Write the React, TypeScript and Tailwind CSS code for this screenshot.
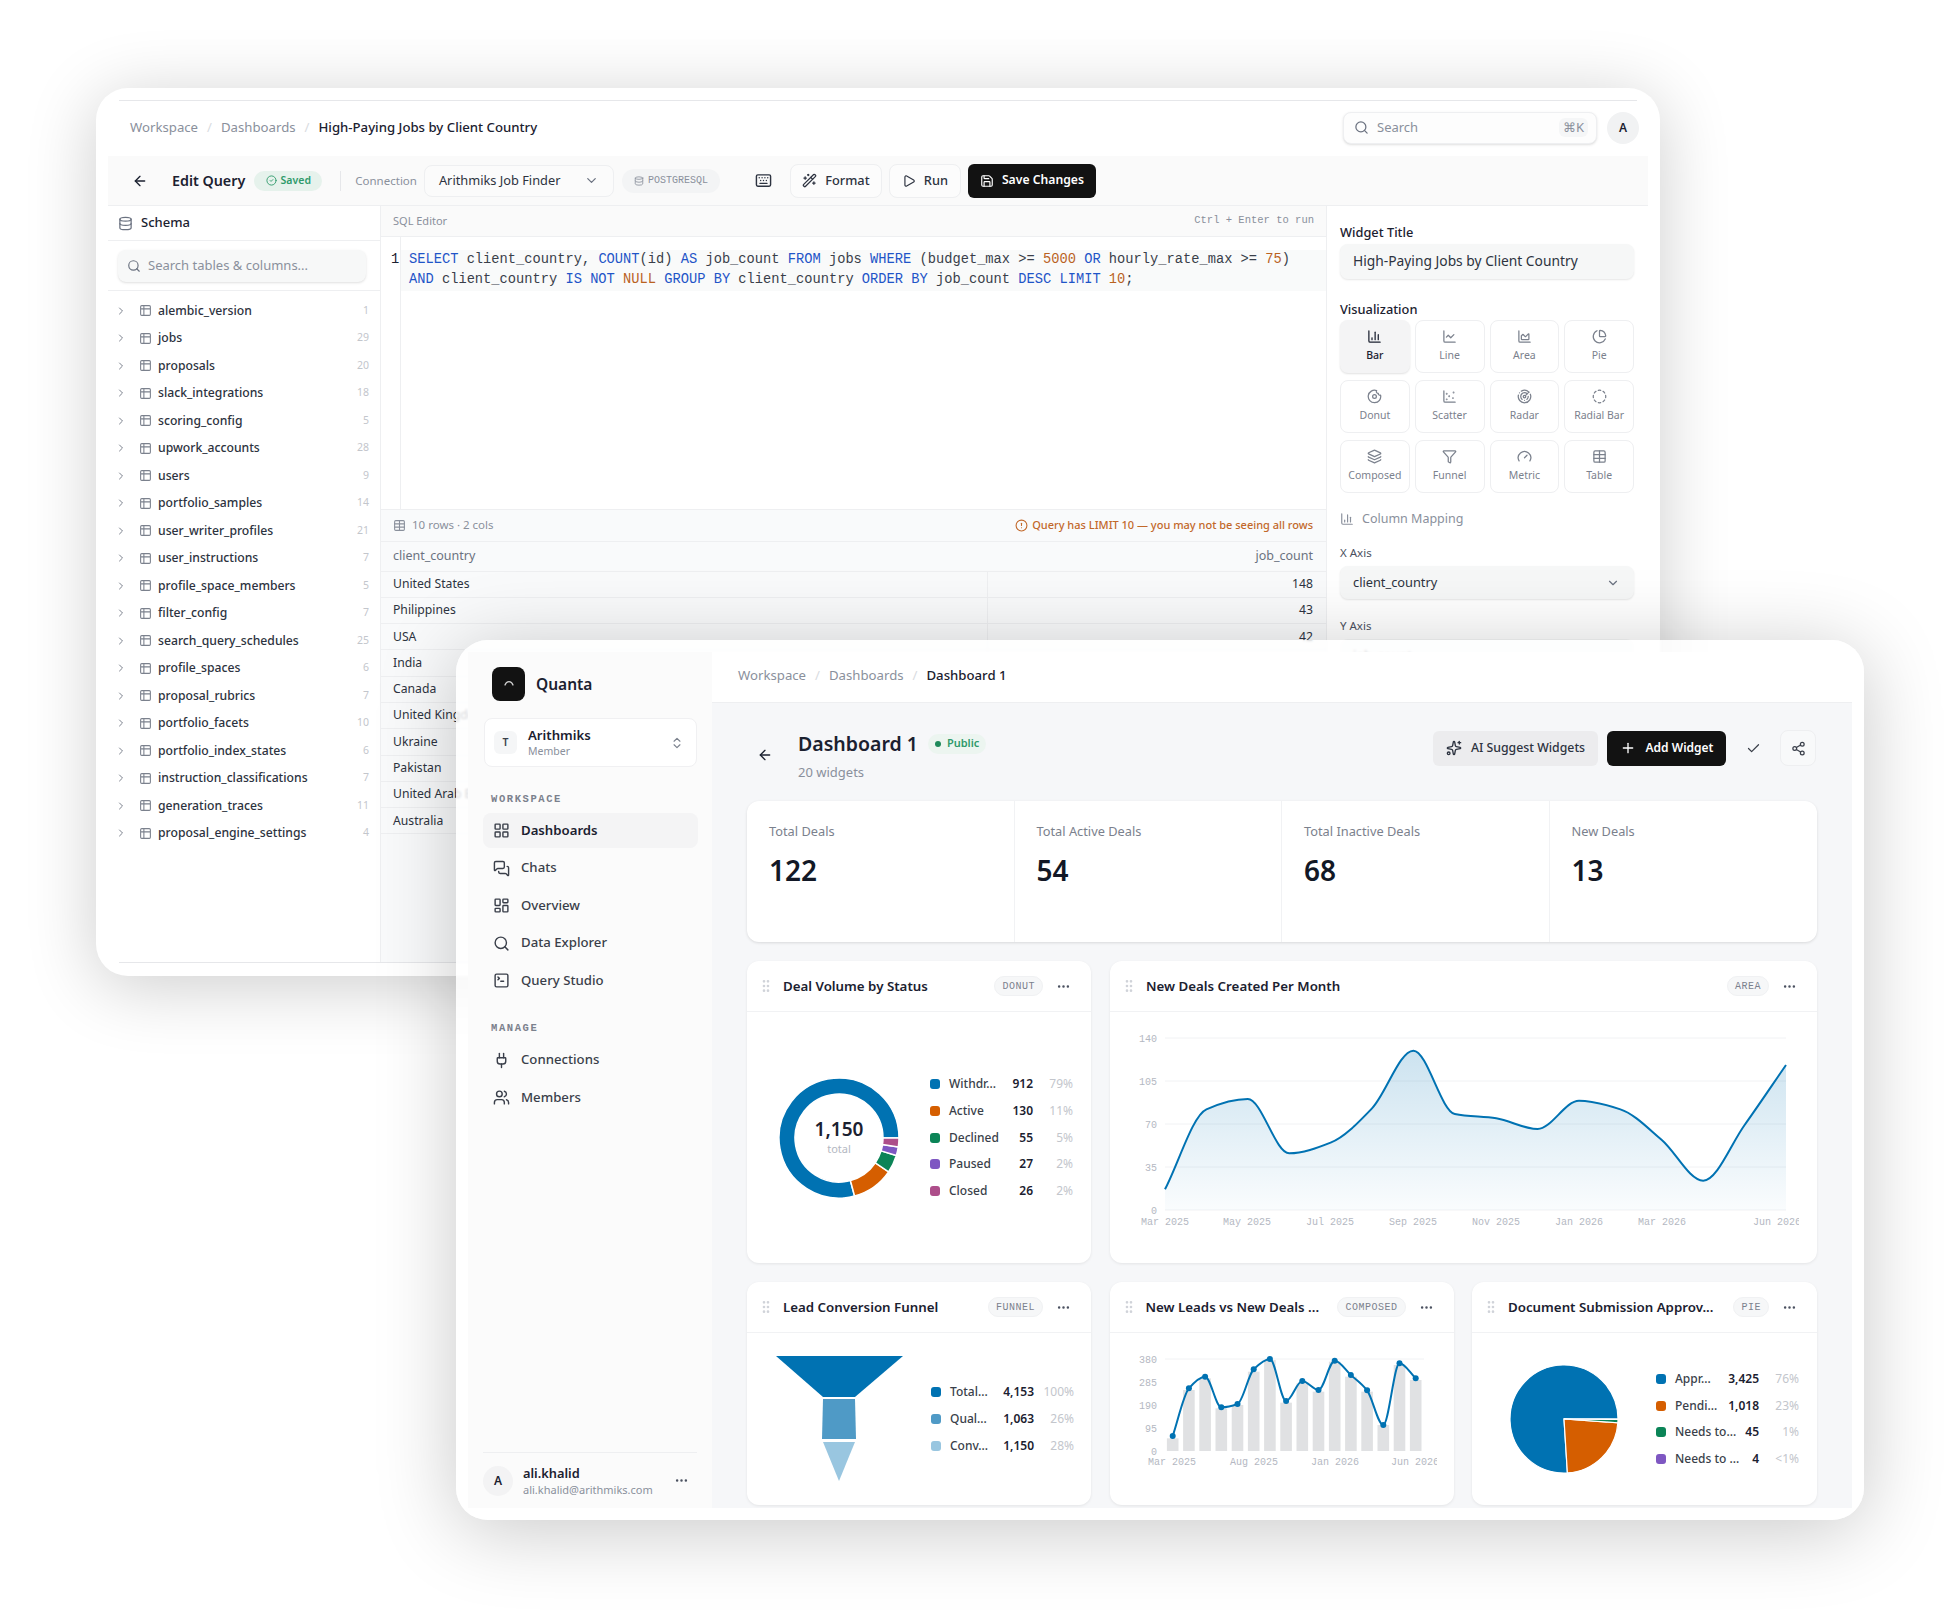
import {
  ArrowLeft, ChartArea, ChartColumn, ChartLine, ChartPie, ChartScatter, Check, ChevronDown, ChevronRight,
  ChevronsUpDown, CircleAlert, CircleCheck, CircleDashed, Database, Donut, Ellipsis, Funnel, Gauge, GripVertical,
  Keyboard, Layers, LayoutDashboard, LayoutGrid, MessagesSquare, Play, Plug, Plus, Radar, Save, Search, Share2,
  Sparkles, SquareTerminal, Table, Table2, Users, WandSparkles,
} from "lucide-react";

const tables: [string, number][] = [
  ["alembic_version", 1], ["jobs", 29], ["proposals", 20], ["slack_integrations", 18], ["scoring_config", 5],
  ["upwork_accounts", 28], ["users", 9], ["portfolio_samples", 14], ["user_writer_profiles", 21],
  ["user_instructions", 7], ["profile_space_members", 5], ["filter_config", 7], ["search_query_schedules", 25],
  ["profile_spaces", 6], ["proposal_rubrics", 7], ["portfolio_facets", 10], ["portfolio_index_states", 6],
  ["instruction_classifications", 7], ["generation_traces", 11], ["proposal_engine_settings", 4],
];

const results: [string, string][] = [
  ["United States", "148"], ["Philippines", "43"], ["USA", "42"], ["India", ""], ["Canada", ""],
  ["United Kingdom", ""], ["Ukraine", ""], ["Pakistan", ""], ["United Arab Emirates", ""], ["Australia", ""],
];

const vizTypes = [
  { name: "Bar", Icon: ChartColumn }, { name: "Line", Icon: ChartLine }, { name: "Area", Icon: ChartArea },
  { name: "Pie", Icon: ChartPie }, { name: "Donut", Icon: Donut }, { name: "Scatter", Icon: ChartScatter },
  { name: "Radar", Icon: Radar }, { name: "Radial Bar", Icon: CircleDashed }, { name: "Composed", Icon: Layers },
  { name: "Funnel", Icon: Funnel }, { name: "Metric", Icon: Gauge }, { name: "Table", Icon: Table },
];

const kpis = [["Total Deals", "122"], ["Total Active Deals", "54"], ["Total Inactive Deals", "68"], ["New Deals", "13"]];

const BLUE = "#0072b2";
const ORANGE = "#d55e00";
const GREEN = "#0b8457";
const PURPLE = "#7e57c2";
const PINK = "#ad4e8a";

// monotone cubic, same shape recharts draws
function monotone(pts: [number, number][]) {
  const n = pts.length;
  const d: number[] = [];
  for (let i = 0; i < n - 1; i++) d.push((pts[i + 1][1] - pts[i][1]) / (pts[i + 1][0] - pts[i][0]));
  const m = pts.map((_, i) => {
    if (i === 0) return d[0];
    if (i === n - 1) return d[n - 2];
    if (d[i - 1] * d[i] <= 0) return 0;
    return (2 * d[i - 1] * d[i]) / (d[i - 1] + d[i]);
  });
  let out = `M${pts[0][0]} ${pts[0][1]}`;
  for (let i = 0; i < n - 1; i++) {
    const h = (pts[i + 1][0] - pts[i][0]) / 3;
    out += `C${pts[i][0] + h} ${pts[i][1] + m[i] * h} ${pts[i + 1][0] - h} ${pts[i + 1][1] - m[i + 1] * h} ${pts[i + 1][0]} ${pts[i + 1][1]}`;
  }
  return out;
}

function polar(cx: number, cy: number, r: number, deg: number) {
  const a = (deg * Math.PI) / 180;
  return [cx + r * Math.cos(a), cy - r * Math.sin(a)];
}

// slices run counter clockwise from 3 o'clock
function slice(cx: number, cy: number, ro: number, ri: number, from: number, to: number) {
  const large = to - from > 180 ? 1 : 0;
  const [x1, y1] = polar(cx, cy, ro, from);
  const [x2, y2] = polar(cx, cy, ro, to);
  if (ri === 0) return `M${cx} ${cy}L${x1} ${y1}A${ro} ${ro} 0 ${large} 0 ${x2} ${y2}Z`;
  const [x3, y3] = polar(cx, cy, ri, to);
  const [x4, y4] = polar(cx, cy, ri, from);
  return `M${x1} ${y1}A${ro} ${ro} 0 ${large} 0 ${x2} ${y2}L${x3} ${y3}A${ri} ${ri} 0 ${large} 1 ${x4} ${y4}Z`;
}

const areaY = [718, 478, 447, 610, 578, 475, 302, 492, 505, 537, 452, 478, 570, 692, 525, 345];
const areaPts: [number, number][] = areaY.map((y, i) => [1165 + i * 41.4, 950 + y / 3]);
const comboLine = [498, 355, 320, 412, 402, 298, 267, 393, 333, 360, 272, 315, 361, 465, 280, 325];
const comboBars = [505, 360, 325, 415, 405, 305, 270, 398, 340, 365, 275, 320, 365, 465, 285, 330];
const comboPts: [number, number][] = comboLine.map((y, i) => [1172.7 + i * 16.2, 1270 + y / 3]);

const Crumbs = ({ items }: { items: string[] }) => (
  <div className="flex items-center text-[13.2px]">
    {items.map((t, i) => (
      <div key={t} className="flex items-center">
        {i > 0 && <span className="mx-[9px] text-[#d9dce1]">/</span>}
        <span className={i === items.length - 1 ? "font-medium text-[#1b2130]" : "text-[#8a909c]"}>{t}</span>
      </div>
    ))}
  </div>
);

const BackWindow = () => (
  <div className="absolute left-[96px] top-[88px] h-[888px] w-[1564px] rounded-[32px] bg-white p-3 shadow-[0_10px_70px_rgba(0,0,0,0.2)]">
    <div className="flex h-[863px] flex-col">
      <div className="mx-[11px] h-px shrink-0 bg-[#e6e7ea]" />
      {/* top bar */}
      <div className="mb-[2px] flex h-[53px] shrink-0 items-center justify-between pl-[22px] pr-[9px]">
        <Crumbs items={["Workspace", "Dashboards", "High-Paying Jobs by Client Country"]} />
        <div className="flex items-center gap-[10px]">
          <div className="flex h-[32px] w-[254px] items-center rounded-lg border border-[#eeeff1] bg-[#fdfdfd] pl-[10px] pr-2 shadow-sm">
            <Search size={15} className="text-[#6b7280]" />
            <span className="ml-2 text-[13px] text-[#8a909c]">Search</span>
            <span className="ml-auto rounded-md bg-[#f5f6f7] px-1 text-[13px] text-[#8a909c]">⌘K</span>
          </div>
          <div className="flex h-[32px] w-[32px] items-center justify-center rounded-full bg-[#f1f2f3] text-[12px] font-semibold text-[#1b2130]">A</div>
        </div>
      </div>
      {/* toolbar */}
      <div className="flex h-[50px] shrink-0 items-center border-b border-[#eeeff1] bg-[#fafafa] pl-[24px]">
        <ArrowLeft size={16} className="text-[#1b2130]" />
        <span className="ml-[24px] text-[14.3px] font-semibold text-[#1b2130]">Edit Query</span>
        <span className="ml-[9px] flex h-[20px] w-[68px] items-center justify-center gap-1 rounded-full bg-[#e6f2ec] text-[10.5px] font-semibold text-[#2f9a6b]">
          <CircleCheck size={11} />
          Saved
        </span>
        <span className="ml-[18px] h-[20px] w-px bg-[#e6e7ea]" />
        <span className="ml-[14px] text-[11.5px] text-[#8a909c]">Connection</span>
        <div className="ml-[7px] flex h-[32px] w-[190px] items-center justify-between rounded-lg border border-[#eeeff1] bg-[#fbfbfb] pl-[14px] pr-[14px] text-[12.8px] text-[#2d3340]">
          Arithmiks Job Finder
          <ChevronDown size={15} className="text-[#6b7280]" />
        </div>
        <span className="ml-[8px] flex h-[24px] w-[98px] items-center justify-center gap-1 rounded-full bg-[#f3f4f5] font-['Liberation_Mono',monospace] text-[10px] text-[#8a909c]">
          <Database size={10} />
          POSTGRESQL
        </span>
        <Keyboard size={17} className="ml-[35px] text-[#2d3340]" />
        <div className="ml-[18px] flex h-[34px] w-[92px] items-center justify-center gap-2 rounded-lg border border-[#eeeff1] bg-[#fcfcfc] text-[12.8px] font-medium text-[#2d3340]">
          <WandSparkles size={15} />
          Format
        </div>
        <div className="ml-[7px] flex h-[34px] w-[72px] items-center justify-center gap-2 rounded-lg border border-[#eeeff1] bg-[#fcfcfc] text-[12.8px] font-medium text-[#2d3340]">
          <Play size={14} />
          Run
        </div>
        <div className="ml-[7px] flex h-[34px] w-[128px] items-center justify-center gap-2 rounded-md bg-[#121212] text-[12.2px] font-semibold text-white">
          <Save size={14} />
          Save Changes
        </div>
      </div>
      <div className="flex min-h-0 flex-1">
        {/* schema */}
        <div className="w-[272px] shrink-0">
          <div className="flex h-[35px] items-center gap-2 border-b border-[#eeeff1] pl-[10px] text-[13px] font-medium text-[#1b2130]">
            <Database size={15} className="text-[#6b7280]" />
            Schema
          </div>
          <div className="flex h-[50px] items-center border-b border-[#eeeff1] pl-[10px] pr-[14px]">
            <div className="flex h-[32px] w-full items-center gap-[7px] rounded-lg bg-[#f7f8f8] pl-[9px] text-[13px] text-[#8a909c] shadow-sm">
              <Search size={14} className="text-[#6b7280]" />
              Search tables &amp; columns...
            </div>
          </div>
          <div className="pt-[6px]">
            {tables.map(([name, n]) => (
              <div key={name} className="flex h-[27.5px] items-center pl-[7px] pr-[11px]">
                <ChevronRight size={12} className="text-[#7b818d]" />
                <Table2 size={13} className="ml-[12px] text-[#7b818d]" />
                <span className="ml-[6px] text-[12.2px] font-medium text-[#2d3340]">{name}</span>
                <span className="ml-auto text-[10.5px] text-[#c3c6cc]">{n}</span>
              </div>
            ))}
          </div>
        </div>
        {/* editor + results */}
        <div className="flex min-w-0 flex-1 flex-col border-l border-[#eeeff1]">
          <div className="flex h-[31px] shrink-0 items-center justify-between border-b border-[#eeeff1] bg-[#fafafa] pl-[12px] pr-[12px] text-[11px] text-[#8a909c]">
            <span>SQL Editor</span>
            <span className="font-['Liberation_Mono',monospace] text-[10.5px]">Ctrl + Enter to run</span>
          </div>
          <div className="flex min-h-0 flex-1 font-['Liberation_Mono',monospace] text-[13.72px] leading-[20px] text-[#3a3f4a]">
            <div className="w-[20px] shrink-0 border-r border-[#eeeff1] pl-[10px] pt-[13px] text-[#1b2130]">1</div>
            <div className="min-w-0 flex-1">
              <div className="mt-[13px] h-[41px] whitespace-pre bg-[#f9fafa] pl-[8px]">
                <div>
                  <b className="font-normal text-[#1f55c8]">SELECT</b> client_country, <b className="font-normal text-[#1f55c8]">COUNT</b>(id) <b className="font-normal text-[#1f55c8]">AS</b> job_count <b className="font-normal text-[#1f55c8]">FROM</b> jobs <b className="font-normal text-[#1f55c8]">WHERE</b> (budget_max &gt;= <b className="font-normal text-[#b9621f]">5000</b> <b className="font-normal text-[#1f55c8]">OR</b> hourly_rate_max &gt;= <b className="font-normal text-[#b9621f]">75</b>)
                </div>
                <div>
                  <b className="font-normal text-[#1f55c8]">AND</b> client_country <b className="font-normal text-[#1f55c8]">IS NOT</b> <b className="font-normal text-[#b9621f]">NULL</b> <b className="font-normal text-[#1f55c8]">GROUP BY</b> client_country <b className="font-normal text-[#1f55c8]">ORDER BY</b> job_count <b className="font-normal text-[#1f55c8]">DESC LIMIT</b> <b className="font-normal text-[#b9621f]">10</b>;
                </div>
              </div>
            </div>
          </div>
          <div className="h-[453.5px] shrink-0 bg-[#f9fafb]">
            <div className="flex h-[33px] items-center justify-between border-y border-[#eeeff1] pl-[12px] pr-[13px]">
              <span className="flex items-center gap-[6px] text-[11.5px] text-[#8a909c]">
                <Table size={13} />
                10 rows · 2 cols
              </span>
              <span className="flex items-center gap-1 text-[11px] font-medium text-[#c2682a]">
                <CircleAlert size={13} />
                Query has LIMIT 10 — you may not be seeing all rows
              </span>
            </div>
            <div className="flex h-[30px] items-center justify-between border-b border-[#eeeff1] pl-[12px] pr-[13px] text-[12.5px] text-[#6b7280]">
              <span>client_country</span>
              <span>job_count</span>
            </div>
            {results.map(([c, v]) => (
              <div key={c} className="flex h-[26.3px] border-b border-[#eeeff1] text-[12.2px] text-[#2d3340]">
                <div className="flex w-[607px] shrink-0 items-center border-r border-[#eeeff1] pl-[12px]">{c}</div>
                <div className="flex flex-1 items-center justify-end pr-[13px]">{v}</div>
              </div>
            ))}
          </div>
        </div>
        {/* widget config */}
        <div className="w-[322px] shrink-0 border-l border-[#eeeff1] pl-[13px] pr-[14px] pt-[18px]">
          <div className="text-[12.8px] font-medium leading-[16px] text-[#1b2130]">Widget Title</div>
          <div className="mt-[4px] flex h-[35px] items-center rounded-lg bg-[#f6f7f7] pl-[13px] text-[13.8px] text-[#2d3340] shadow-[0_1px_2px_rgba(0,0,0,0.1)]">
            High-Paying Jobs by Client Country
          </div>
          <div className="mt-[22px] text-[12.8px] font-medium leading-[16px] text-[#1b2130]">Visualization</div>
          <div className="mt-[3px] grid grid-cols-4 gap-x-[5px] gap-y-[7px]">
            {vizTypes.map(({ name, Icon }, i) => (
              <div
                key={name}
                className={
                  i === 0
                    ? "flex h-[53px] flex-col items-center justify-center gap-[4px] rounded-lg bg-[#f4f4f5] text-[10.5px] font-medium text-[#1b2130] shadow-[0_1px_2px_rgba(0,0,0,0.12)]"
                    : "flex h-[53px] flex-col items-center justify-center gap-[4px] rounded-lg border border-[#eeeff1] text-[10.5px] text-[#7b818d]"
                }
              >
                <Icon size={15} />
                {name}
              </div>
            ))}
          </div>
          <div className="mt-[17px] flex items-center gap-[8px] text-[12.5px] text-[#8a909c]">
            <ChartColumn size={14} />
            Column Mapping
          </div>
          <div className="mt-[17.5px] text-[11.5px] leading-[14px] text-[#4b5160]">X Axis</div>
          <div className="mt-[6px] flex h-[33px] items-center justify-between rounded-lg bg-[#f6f7f7] pl-[13px] pr-[14px] text-[12.8px] text-[#2d3340] shadow-[0_1px_2px_rgba(0,0,0,0.1)]">
            client_country
            <ChevronDown size={14} className="text-[#6b7280]" />
          </div>
          <div className="mt-[20px] text-[11.5px] leading-[14px] text-[#4b5160]">Y Axis</div>
          <div className="mt-[6px] flex h-[33px] items-center rounded-lg bg-[#f6f7f7] pl-[13px] text-[12.8px] text-[#2d3340]">job_count</div>
        </div>
      </div>
      <div className="mx-[11px] h-px shrink-0 bg-[#e6e7ea]" />
    </div>
  </div>
);

const NavItem = ({ Icon, label, active }: { Icon: typeof Search; label: string; active?: boolean }) => (
  <div
    className={
      active
        ? "mb-[2.5px] flex h-[35px] items-center rounded-lg bg-[#f4f4f5] pl-[10px] text-[13.2px] font-semibold text-[#1b2130]"
        : "mb-[2.5px] flex h-[35px] items-center rounded-lg pl-[10px] text-[13.2px] font-medium text-[#3a3f4a]"
    }
  >
    <Icon size={17} className="text-[#3a3f4a]" />
    <span className="ml-[11px]">{label}</span>
  </div>
);

const Sidebar = () => (
  <div className="flex w-[244px] shrink-0 flex-col bg-[#fbfbfb]">
    <div className="ml-[24px] mt-[15px] flex items-center">
      <div className="flex h-[34px] w-[33px] items-center justify-center rounded-lg bg-[#121212]">
        <svg width="14" height="14" viewBox="0 0 14 14" fill="none" stroke="#cfcfcf" strokeWidth="1.3" strokeLinecap="round">
          <path d="M3 8 C4.5 3.5 9.5 3.5 11 8" />
        </svg>
      </div>
      <span className="ml-[11px] pt-[1px] text-[15.5px] font-semibold text-[#1b2130]">Quanta</span>
    </div>
    <div className="ml-[16px] mt-[17px] flex h-[49px] w-[213px] items-center rounded-lg border border-[#f0f0f2] bg-white pl-[9px] pr-[12px]">
      <div className="flex h-[23px] w-[23px] items-center justify-center rounded-md bg-[#f5f6f7] text-[10.5px] font-semibold text-[#3a3f4a]">T</div>
      <div className="ml-[11px]">
        <div className="text-[13.2px] font-semibold leading-[17px] text-[#1b2130]">Arithmiks</div>
        <div className="text-[10.5px] leading-[14px] text-[#8a909c]">Member</div>
      </div>
      <ChevronsUpDown size={14} className="ml-auto text-[#7b818d]" />
    </div>
    <div className="ml-[23px] mt-[25px] font-['Liberation_Mono',monospace] text-[10.5px] font-bold leading-[14px] tracking-[0.15em] text-[#7b818d]">WORKSPACE</div>
    <div className="ml-[15px] mr-[14px] mt-[7px]">
      <NavItem Icon={LayoutGrid} label="Dashboards" active />
      <NavItem Icon={MessagesSquare} label="Chats" />
      <NavItem Icon={LayoutDashboard} label="Overview" />
      <NavItem Icon={Search} label="Data Explorer" />
      <NavItem Icon={SquareTerminal} label="Query Studio" />
    </div>
    <div className="ml-[23px] mt-[20px] font-['Liberation_Mono',monospace] text-[10.5px] font-bold leading-[14px] tracking-[0.15em] text-[#7b818d]">MANAGE</div>
    <div className="ml-[15px] mr-[14px] mt-[8px]">
      <NavItem Icon={Plug} label="Connections" />
      <NavItem Icon={Users} label="Members" />
    </div>
    <div className="mx-[15px] mt-auto flex h-[56px] items-center border-t border-[#eeeff1]">
      <div className="flex h-[30px] w-[30px] items-center justify-center rounded-full bg-[#f3f3f4] text-[12px] font-semibold text-[#1b2130]">A</div>
      <div className="ml-[10px]">
        <div className="text-[12.8px] font-semibold leading-[17px] text-[#1b2130]">ali.khalid</div>
        <div className="text-[11px] leading-[15px] text-[#8a909c]">ali.khalid@arithmiks.com</div>
      </div>
      <Ellipsis size={15} className="ml-auto mr-[8px] text-[#4b5160]" />
    </div>
  </div>
);

const CardHeader = ({ title, tag }: { title: string; tag: string }) => (
  <div className="flex h-[51px] shrink-0 items-center border-b border-[#f1f2f4] pl-[11px] pr-[20px]">
    <GripVertical size={16} className="text-[#d0d3d9]" />
    <span className="ml-[9px] pt-[2px] text-[13.3px] font-semibold text-[#1b2130]">{title}</span>
    <span className="ml-auto flex h-[20px] items-center rounded-full border border-[#f0f1f3] bg-[#f6f7f8] px-[7px] font-['Liberation_Mono',monospace] text-[10px] tracking-[0.05em] text-[#7b818d]">{tag}</span>
    <Ellipsis size={15} className="ml-[13px] text-[#4b5160]" />
  </div>
);

const Legend = ({ rows }: { rows: [string, string, string, string][] }) => (
  <div className="w-[143px]">
    {rows.map(([color, name, val, pct]) => (
      <div key={name} className="flex h-[26.7px] items-center text-[12px]">
        <span className="h-[10px] w-[10px] shrink-0 rounded-[3px]" style={{ backgroundColor: color }} />
        <span className="ml-[9px] font-medium text-[#3a3f4a]">{name}</span>
        <span className="ml-auto font-semibold text-[#1b2130]">{val}</span>
        <span className="w-[40px] text-right text-[#c3c6cc]">{pct}</span>
      </div>
    ))}
  </div>
);

const Card = ({ className, children }: { className: string; children: React.ReactNode }) => (
  <div className={`flex flex-col rounded-xl bg-white shadow-[0_1px_3px_rgba(0,0,0,0.08)] ${className}`}>{children}</div>
);

const axisClass = "font-['Liberation_Mono',monospace] text-[10px] fill-[#b4b8c2]";

const DonutChart = () => {
  const segs: [string, number, number][] = [
    [BLUE, 0, 285], [ORANGE, 285, 325.7], [GREEN, 325.7, 343], [PURPLE, 343, 351.4], [PINK, 351.4, 360],
  ];
  return (
    <svg width="122" height="122" viewBox="778 1076 122 122" className="shrink-0">
      {segs.map(([c, a, b]) => (
        <path key={c} d={slice(839, 1137, 60, 44, a, b)} fill={c} stroke="#fff" strokeWidth="1.5" />
      ))}
      <text x="839" y="1135" textAnchor="middle" className="text-[19px] font-semibold fill-[#1b2130]">1,150</text>
      <text x="839" y="1152" textAnchor="middle" className="text-[11px] fill-[#b4b8c2]">total</text>
    </svg>
  );
};

const AreaChart = () => {
  const line = monotone(areaPts);
  return (
    <svg width="707" height="251" viewBox="1110 1012 707 251" className="block">
      <defs>
        <linearGradient id="areaFill" x1="0" y1="0" x2="0" y2="1">
          <stop offset="0%" stopColor={BLUE} stopOpacity="0.2" />
          <stop offset="100%" stopColor={BLUE} stopOpacity="0.02" />
        </linearGradient>
      </defs>
      {[["140", 1038], ["105", 1081], ["70", 1124], ["35", 1167], ["0", 1210]].map(([l, y]) => (
        <g key={l}>
          <line x1="1165" x2="1786" y1={y} y2={y} stroke="#f1f2f4" />
          <text x="1157" y={Number(y) + 4} textAnchor="end" className={axisClass}>{l}</text>
        </g>
      ))}
      <path d={`${line}L1786 1210L1165 1210Z`} fill="url(#areaFill)" />
      <path d={line} fill="none" stroke={BLUE} strokeWidth="2" />
      {[["Mar 2025", 1165], ["May 2025", 1247], ["Jul 2025", 1330], ["Sep 2025", 1413], ["Nov 2025", 1496], ["Jan 2026", 1579], ["Mar 2026", 1662]].map(([l, x]) => (
        <text key={l} x={x} y="1225" textAnchor="middle" className={axisClass}>{l}</text>
      ))}
      <svg x="1700" y="1212" width="99" height="20" viewBox="1700 1212 99 20">
        <text x="1777" y="1225" textAnchor="middle" className={axisClass}>Jun 2026</text>
      </svg>
    </svg>
  );
};

const FunnelChart = () => (
  <svg width="127" height="126" viewBox="776 1355 127 126" className="shrink-0">
    <polygon points="776,1355 903,1355 855,1396 823,1396" fill={BLUE} />
    <polygon points="823,1398 855,1398 856,1438 822,1438" fill="#4f9ac6" />
    <polygon points="823,1441 855,1441 839,1480" fill="#99c6e0" />
  </svg>
);

const ComposedChart = () => (
  <svg width="344" height="172" viewBox="1110 1333 344 172" className="block">
    {[["380", 1359], ["285", 1382], ["190", 1405], ["95", 1428], ["0", 1451]].map(([l, y]) => (
      <g key={l}>
        {l === "380" && <line x1="1165" x2="1424" y1={y} y2={y} stroke="#f1f2f4" />}
        <text x="1157" y={Number(y) + 4} textAnchor="end" className={axisClass}>{l}</text>
      </g>
    ))}
    {comboBars.map((t, i) => (
      <rect key={i} x={1172.7 + i * 16.2 - 5.8} y={1270 + t / 3} width="11.6" height={1451 - (1270 + t / 3)} fill="#e0e1e3" />
    ))}
    <path d={monotone(comboPts)} fill="none" stroke={BLUE} strokeWidth="2" />
    {comboPts.map(([x, y], i) => (
      <circle key={i} cx={x} cy={y} r="3" fill={BLUE} />
    ))}
    {[["Mar 2025", 1172], ["Aug 2025", 1254], ["Jan 2026", 1335]].map(([l, x]) => (
      <text key={l} x={x} y="1465" textAnchor="middle" className={axisClass}>{l}</text>
    ))}
    <svg x="1380" y="1453" width="57" height="20" viewBox="1380 1453 57 20">
      <text x="1415" y="1465" textAnchor="middle" className={axisClass}>Jun 2026</text>
    </svg>
  </svg>
);

const PieChart = () => {
  const segs: [string, number, number][] = [
    [BLUE, 0, 273.6], [ORANGE, 273.6, 356], [GREEN, 356, 359.5], [PURPLE, 359.5, 360],
  ];
  return (
    <svg width="112" height="112" viewBox="1508 1362 112 112" className="shrink-0">
      {segs.map(([c, a, b]) => (
        <path key={c} d={slice(1564, 1418, 54, 0, a, b)} fill={c} stroke="#fff" strokeWidth="1.2" />
      ))}
    </svg>
  );
};

const FrontWindow = () => (
  <div className="absolute left-[456px] top-[640px] h-[880px] w-[1408px] rounded-[32px] bg-white/80 p-3 shadow-[0_10px_80px_rgba(0,0,0,0.22)] backdrop-blur-[1px]">
    <div className="flex h-[856px] overflow-hidden">
      <Sidebar />
      <div className="flex min-w-0 flex-1 flex-col">
        <div className="flex h-[51px] shrink-0 items-center border-b border-[#eeeff1] bg-white pb-[2px] pl-[26px]">
          <Crumbs items={["Workspace", "Dashboards", "Dashboard 1"]} />
        </div>
        <div className="min-h-0 flex-1 overflow-hidden bg-[#f6f7f9] px-[35px] pt-[25px]">
          <div className="flex h-[73px] items-start">
            <ArrowLeft size={16} className="ml-[10px] mt-[19px] text-[#1b2130]" />
            <div className="ml-[25px]">
              <div className="flex items-center">
                <span className="pt-[1px] text-[19.5px] font-semibold leading-[30px] text-[#1b2130]">Dashboard 1</span>
                <span className="ml-[10px] flex h-[20px] items-center gap-[6px] rounded-full bg-[#ecf5f0] px-[7px] text-[11px] font-semibold text-[#2f9a6b]">
                  <span className="h-[6px] w-[6px] rounded-full bg-[#1f8a5b]" />
                  Public
                </span>
              </div>
              <div className="mt-[4px] text-[13px] leading-[18px] text-[#8a909c]">20 widgets</div>
            </div>
            <div className="ml-auto mr-px mt-[2px] flex items-center">
              <div className="flex h-[35px] w-[165px] items-center justify-center gap-[9px] rounded-md bg-[#ececee] text-[12.3px] font-medium text-[#2d3340]">
                <Sparkles size={16} />
                AI Suggest Widgets
              </div>
              <div className="ml-[9px] flex h-[35px] w-[119px] items-center justify-center gap-[10px] rounded-md bg-[#121212] text-[12px] font-semibold text-white">
                <Plus size={16} />
                Add Widget
              </div>
              <div className="ml-[11px] flex h-[35px] w-[32px] items-center justify-center rounded-md text-[#3a3f4a]">
                <Check size={15} />
              </div>
              <div className="ml-[11px] flex h-[36px] w-[36px] items-center justify-center rounded-lg border border-[#eeeff1] bg-[#f8f9fa] text-[#3a3f4a]">
                <Share2 size={15} />
              </div>
            </div>
          </div>
          <div className="grid h-[141px] grid-cols-4 rounded-xl bg-white shadow-[0_1px_3px_rgba(0,0,0,0.12)]">
            {kpis.map(([label, value], i) => (
              <div key={label} className={i < 3 ? "border-r border-[#f1f2f4] pl-[22px] pt-[21px]" : "pl-[22px] pt-[21px]"}>
                <div className="text-[12.8px] leading-[18px] text-[#7b818d]">{label}</div>
                <div className="mt-[12px] text-[28px] font-semibold leading-[36px] text-[#121826]">{value}</div>
              </div>
            ))}
          </div>
          <div className="mt-[19px] flex h-[302px] gap-[19px]">
            <Card className="w-[344px] shrink-0">
              <CardHeader title="Deal Volume by Status" tag="DONUT" />
              <div className="flex flex-1 items-center pl-[31px]">
                <DonutChart />
                <div className="ml-[30px]">
                  <Legend
                    rows={[
                      [BLUE, "Withdr...", "912", "79%"], [ORANGE, "Active", "130", "11%"], [GREEN, "Declined", "55", "5%"],
                      [PURPLE, "Paused", "27", "2%"], [PINK, "Closed", "26", "2%"],
                    ]}
                  />
                </div>
              </div>
            </Card>
            <Card className="w-[707px] shrink-0">
              <CardHeader title="New Deals Created Per Month" tag="AREA" />
              <AreaChart />
            </Card>
          </div>
          <div className="mt-[19px] flex h-[223px] gap-[18.5px]">
            <Card className="w-[344px] shrink-0">
              <CardHeader title="Lead Conversion Funnel" tag="FUNNEL" />
              <div className="flex flex-1 items-center pl-[29px]">
                <FunnelChart />
                <div className="ml-[28px]">
                  <Legend rows={[[BLUE, "Total...", "4,153", "100%"], ["#4f9ac6", "Qual...", "1,063", "26%"], ["#99c6e0", "Conv...", "1,150", "28%"]]} />
                </div>
              </div>
            </Card>
            <Card className="w-[344px] shrink-0">
              <CardHeader title="New Leads vs New Deals ..." tag="COMPOSED" />
              <ComposedChart />
            </Card>
            <Card className="w-[345px] shrink-0">
              <CardHeader title="Document Submission Approv..." tag="PIE" />
              <div className="flex flex-1 items-center pl-[36px]">
                <PieChart />
                <div className="ml-[36px]">
                  <Legend
                    rows={[
                      [BLUE, "Appr...", "3,425", "76%"], [ORANGE, "Pendi...", "1,018", "23%"],
                      [GREEN, "Needs to...", "45", "1%"], [PURPLE, "Needs to ...", "4", "<1%"],
                    ]}
                  />
                </div>
              </div>
            </Card>
          </div>
        </div>
      </div>
    </div>
  </div>
);

export default function App() {
  return (
    <div className="relative h-[1624px] w-[1960px] overflow-hidden bg-white font-['Noto_Sans',sans-serif]">
      <BackWindow />
      <FrontWindow />
    </div>
  );
}
